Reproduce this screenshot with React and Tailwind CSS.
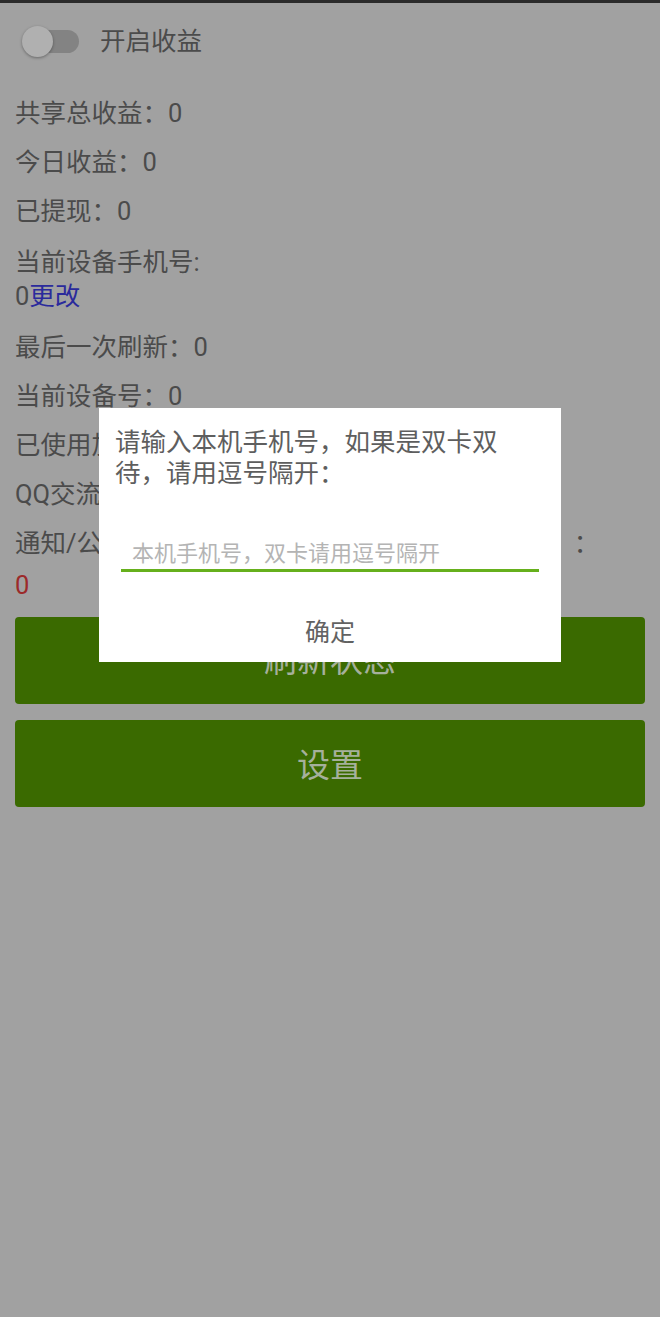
export default function App() {
  const rows = [
    "共享总收益：0",
    "今日收益：0",
    "已提现：0",
  ];
  const rowsAfter = [
    "最后一次刷新：0",
    "当前设备号：0",
    "已使用加速次数：0",
    "QQ交流群：123456789",
  ];

  return (
    <div
      className="relative min-h-[1317px] w-full bg-[#a1a1a1] text-[#4b4b4b]"
      style={{ fontFamily: 'Roboto, "Noto Sans CJK SC", sans-serif' }}
    >
      {/* status bar edge */}
      <div className="h-[3px] bg-[#2b2b2b]" />

      {/* switch row */}
      <div className="mt-[14px] flex h-[48px] items-center">
        <div className="relative ml-[21px] h-[31px] w-[58px]">
          <div className="absolute left-[8px] right-0 top-[4px] h-[23px] rounded-full bg-[#838383]" />
          <div className="absolute left-[1px] top-0 h-[31px] w-[31px] rounded-full bg-[#b0b0b0] shadow-[0_1px_3px_rgba(0,0,0,0.35)]" />
        </div>
        <span className="ml-[21px] text-[25.5px] leading-[34px]">开启收益</span>
      </div>

      {/* info */}
      <div className="mt-[31px] flex flex-col gap-[15px] px-[15px] text-[25.5px] leading-[34px]">
        {rows.map((r, i) => (
          <div key={i}>{r}</div>
        ))}
        <div className="my-[2px]">
          <div>当前设备手机号:</div>
          <div>
            0<span className="text-[#2a2a9c]">更改</span>
          </div>
        </div>
        {rowsAfter.map((r, i) => (
          <div key={i}>{r}</div>
        ))}
        <div>{"通知/公告：欢迎使用，有问题请加群反馈给管理\u00a0\u00a0："}</div>
      </div>
      <div className="mt-[8px] px-[15px] text-[25.5px] leading-[34px] text-[#9c2a2a]">0</div>

      {/* buttons */}
      <div className="mt-[15px] flex flex-col gap-[16px] px-[15px]">
        <button className="h-[87px] w-full rounded-[4px] bg-[#3a6a00] text-[33px] text-[#a5b09c]">
          刷新状态
        </button>
        <button className="h-[87px] w-full rounded-[4px] bg-[#3a6a00] pt-[4px] text-[33px] text-[#a5b09c]">
          设置
        </button>
      </div>

      {/* dialog */}
      <div className="absolute left-[99px] top-[408px] flex h-[254px] w-[462px] flex-col bg-white">
        <p className="pl-[16px] pr-[48px] pt-[19px] text-[25.5px] leading-[31px] text-[#5e5e5e]">
          请输入本机手机号，如果是双卡双待，请用逗号隔开：
        </p>
        <div className="mx-[22px] mt-[50px] border-b-[3px] border-[#66b01c]">
          <input
            className="w-full bg-transparent pl-[11px] text-[22px] leading-[30px] text-[#5e5e5e] outline-none placeholder:text-[#b4b4b4]"
            placeholder="本机手机号，双卡请用逗号隔开"
          />
        </div>
        <div className="mt-[46px] text-center text-[25px] leading-[30px] text-[#626262]">确定</div>
      </div>
    </div>
  );
}
